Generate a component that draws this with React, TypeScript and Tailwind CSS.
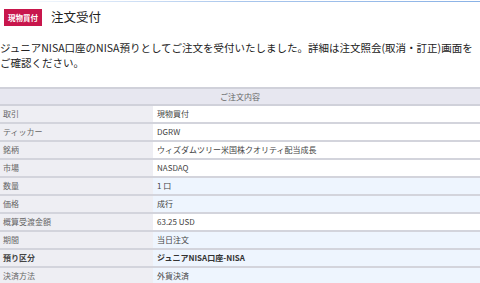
import React from "react";

type Row = { label: string; value: string; tint: boolean; strong?: boolean };

const rows: Row[] = [
  { label: "取引", value: "現物買付", tint: false },
  { label: "ティッカー", value: "DGRW", tint: false },
  { label: "銘柄", value: "ウィズダムツリー米国株クオリティ配当成長", tint: false },
  { label: "市場", value: "NASDAQ", tint: false },
  { label: "数量", value: "1 口", tint: true },
  { label: "価格", value: "成行", tint: true },
  { label: "概算受渡金額", value: "63.25 USD", tint: false },
  { label: "期間", value: "当日注文", tint: true },
  { label: "預り区分", value: "ジュニアNISA口座-NISA", tint: true, strong: true },
  { label: "決済方法", value: "外貨決済", tint: true },
];

export default function App() {
  return (
    <div className="w-[480px] h-[283px] overflow-hidden bg-white font-['Noto_Sans_CJK_JP','Noto_Sans',sans-serif]">
      <div className="mt-px h-px bg-gradient-to-r from-white via-[#a9c6ec] to-[#8ab2e6]" />

      <div className="mt-[7px] flex h-[17px] items-center gap-[9px] pl-[4px]">
        <span className="flex h-[17px] w-[38px] items-center justify-center bg-[#c8164c] text-[7.5px] font-bold leading-none text-white">
          現物買付
        </span>
        <span className="text-[12.5px] leading-none text-[#222]">注文受付</span>
      </div>

      <p className="mt-[14px] whitespace-nowrap text-[10.5px] leading-[15px] text-[#222]">
        ジュニアNISA口座のNISA預りとしてご注文を受付いたしました。詳細は注文照会(取消・訂正)画面を
        <br />
        ご確認ください。
      </p>

      <div className="mt-[17px]">
        <div className="box-border flex h-[19px] items-center justify-center border-y-2 border-[#d0d1da] bg-[#e7e7f0] text-[8px] text-[#666]">
          ご注文内容
        </div>
        {rows.map((r) => (
          <div
            key={r.label}
            className="box-border flex h-[18px] border-b-2 border-[#d3d4dc] text-[8px] leading-none"
          >
            <div
              className={`flex w-[153px] items-center bg-[#eeeef3] pl-[3px] ${
                r.strong ? "font-bold text-[#444]" : "text-[#666]"
              }`}
            >
              {r.label}
            </div>
            <div
              className={`flex flex-1 items-center pl-[4px] ${
                r.tint ? "bg-[#eef5fe]" : "bg-white"
              } ${r.strong ? "font-bold text-[#333]" : "text-[#444]"}`}
            >
              {r.value}
            </div>
          </div>
        ))}
      </div>
    </div>
  );
}
